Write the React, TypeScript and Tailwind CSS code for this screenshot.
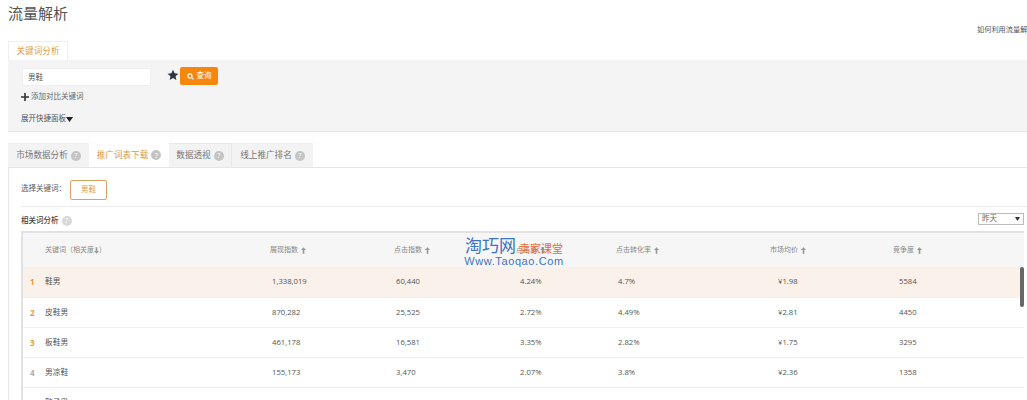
import React from "react";

const font = { fontFamily: '"Open Sans","Noto Sans CJK SC",sans-serif' };

function Help({ light }: { light?: boolean }) {
  return (
    <span className={`inline-flex h-[10px] w-[10px] shrink-0 items-center justify-center rounded-full text-[7px] leading-none text-white ${light ? "bg-[#d8d8d8]" : "bg-[#c4c4c4]"}`}>?</span>
  );
}

function Up() {
  return (
    <svg width="5" height="7" viewBox="0 0 6 8" className="ml-[3px] inline-block shrink-0">
      <path d="M3 0 L6 3.5 H4 V8 H2 V3.5 H0 Z" fill="#999" />
    </svg>
  );
}

const rows = [
  ["1", "鞋男", "1,338,019", "60,440", "4.24%", "4.7%", "¥1.98", "5584"],
  ["2", "皮鞋男", "870,282", "25,525", "2.72%", "4.49%", "¥2.81", "4450"],
  ["3", "板鞋男", "461,178", "16,581", "3.35%", "2.82%", "¥1.75", "3295"],
  ["4", "男凉鞋", "155,173", "3,470", "2.07%", "3.8%", "¥2.36", "1358"],
  ["5", "鞋子男", "79,137", "2,123", "2.74%", "1.79%", "¥1.43", "1681"],
];

const headers = ["展现指数", "点击指数", "点击率", "点击转化率", "市场均价", "竞争度"];

export default function App() {
  return (
    <div style={font} className="h-[400px] w-[1027px] overflow-hidden bg-white text-[8px] text-[#555]">
      <div className="flex h-[41px] items-start justify-between pl-2">
        <h1 className="pt-[1px] text-[15px] font-normal leading-[24px] text-[#555]">流量解析</h1>
        <span className="mt-[23px] w-[50px] overflow-hidden whitespace-nowrap text-[7.2px] leading-[12px] text-[#555]">如何利用流量解析</span>
      </div>

      <div className="pl-2">
        <div className="flex h-[19px] w-[60px] items-center justify-center border border-b-0 border-[#eeeeee] bg-white text-[8.6px] text-[#e0a050]">关键词分析</div>
        <div className="h-[72px] border-b border-[#e5e5e5] bg-[#f4f4f4] pl-[14px] pt-2">
          <div className="flex items-start">
            <div className="flex h-[18px] w-[129px] items-center border border-[#efefef] bg-white pl-[5px] pt-[1px] text-[7.5px] text-[#555]">男鞋</div>
            <svg width="12" height="12" viewBox="0 0 24 24" className="ml-[16px] mt-[1px]">
              <path d="M12 1.5l3.2 7 7.6.8-5.7 5.1 1.6 7.5L12 18l-6.700 3.900 1.600-7.500L1.200 9.300l7.600-.8z" fill="#2f3440" />
            </svg>
            <div className="ml-[1px] mt-[-1px] flex h-[18px] w-[38px] items-center justify-center gap-[3px] rounded-[2px] bg-[#f5870f] text-[7.5px] text-white">
              <svg width="7" height="7" viewBox="0 0 24 24" fill="none" stroke="white" strokeWidth="4">
                <circle cx="10" cy="10" r="7" />
                <path d="M15 15l7 7" />
              </svg>
              <span>查询</span>
            </div>
          </div>
          <div className="mt-[5px] flex h-[12px] items-center text-[7.5px] text-[#666]">
            <svg width="8" height="8" viewBox="0 0 8 8" className="-ml-[1px] mr-[2px] shrink-0">
              <path d="M3.200 0h1.600v3.200H8v1.600H4.800V8H3.200V4.800H0V3.200h3.200z" fill="#333" />
            </svg>
            添加对比关键词
          </div>
          <div className="mt-[10px] -ml-[1px] flex h-[12px] items-center text-[7.5px] text-[#555]">
            展开快捷面板
            <svg width="7" height="5" viewBox="0 0 7 5"><path d="M0 0h7L3.500 5z" fill="#222" /></svg>
          </div>
        </div>
      </div>

      <div className="mt-[11px] pl-2">
        <div className="flex h-[24px] text-[8.6px] text-[#777]">
          <div className="flex w-[81px] items-center justify-center gap-[3px] border-t border-[#eee] bg-[#f3f3f3]">市场数据分析<Help /></div>
          <div className="flex w-[80px] items-center justify-center gap-[3px] bg-white text-[#dc9a48]">推广词表下载<Help /></div>
          <div className="flex w-[63px] items-center justify-center gap-[3px] border-r border-t border-[#e8e8e8] bg-[#f3f3f3]">数据透视<Help /></div>
          <div className="flex w-[81px] items-center justify-center gap-[3px] border-t border-[#eee] bg-[#f3f3f3]">线上推广排名<Help /></div>
        </div>

        <div className="border-l border-t border-[#e6e6e6] pl-[12px]">
          <div className="flex h-[39px] items-center border-b border-[#ececec] pt-[6px] text-[7.5px] text-[#555]">
            <span className="w-[49px] whitespace-nowrap pb-[2px]">选择关键词：</span>
            <div className="flex h-[20px] w-[37px] items-center justify-center rounded-[2px] border border-[#d9a25e] text-[#dc9a48]">男鞋</div>
          </div>
          <div className="flex h-[24px] items-center justify-between pr-[3px]">
            <div className="flex items-center gap-[3px] pt-[3px] text-[7.500px] font-medium text-[#444]">相关词分析<Help light /></div>
            <div className="flex h-[12px] w-[46px] items-center justify-between border border-[#bbb] pl-[3px] pr-[3px] text-[7.500px] text-[#666]">
              <span>昨天</span>
              <svg width="5" height="4" viewBox="0 0 5 4"><path d="M0 0h5L2.500 4z" fill="#333" /></svg>
            </div>
          </div>

          <div className="relative mr-[3px] border-l-2 border-t-2 border-[#e2e2e2]">
            <div className="grid h-[34px] grid-cols-[247px_124px_122px_100px_154px_123px_1fr] items-center bg-[#f6f6f6] text-[7px] text-[#888]">
              <div className="flex items-center pl-[22px]">
                关键词（相关度
                <svg width="5" height="7" viewBox="0 0 6 8" className="shrink-0"><path d="M3 8 L6 4.500 H4 V0 H2 V4.500 H0 Z" fill="#999" /></svg>
                ）
              </div>
              {headers.map((h) => (
                <div key={h} className="flex items-center">{h}<Up /></div>
              ))}
            </div>

            {rows.map((r, i) => (
              <div
                key={r[0]}
                className={`grid grid-cols-[7px_15px_227px_124px_124px_98px_160px_121px_1fr] items-center border-b border-[#f0f0f0] text-[7.700px] text-[#555] ${i === 0 ? "h-[31px] bg-[#fbf1eb]" : "h-[30px] bg-white"}`}
              >
                <div />
                <div className={`text-[8px] font-bold ${i < 3 ? "text-[#dc9a48]" : "text-[#aaa]"}`}>{r[0]}</div>
                {r.slice(1).map((c, j) => (
                  <div key={j}>{c}</div>
                ))}
              </div>
            ))}

            <div className="absolute right-0 top-[34px] h-[40px] w-[4px] rounded-[2px] bg-[#666]" />
            <div className="absolute left-[440px] top-[3px] flex w-[102px] flex-col items-center">
              <div className="flex h-[18px] items-end whitespace-nowrap leading-none">
                <span className="text-[17px] text-[#3f73c0]">淘巧网</span>
                <span className="ml-[3px] text-[11px] text-[#e06b3c]">卖家课堂</span>
              </div>
              <div className="mt-[1px] whitespace-nowrap text-[11px] leading-[12px] tracking-[0.6px] text-[#3f73c0]" style={{ fontFamily: '"Liberation Sans",sans-serif' }}>Www.Taoqao.Com</div>
            </div>
          </div>
        </div>
      </div>
    </div>
  );
}
